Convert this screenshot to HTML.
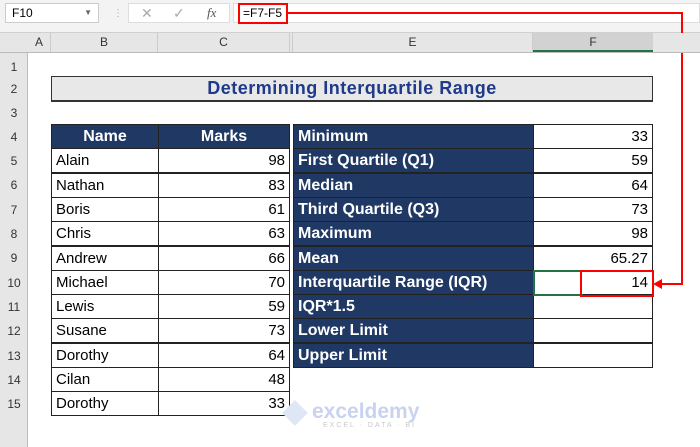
<!DOCTYPE html><html><head><style>
body{margin:0;width:700px;height:447px;overflow:hidden;background:#fff;font-family:"Liberation Sans",sans-serif;position:relative}
.a{position:absolute;box-sizing:border-box}
.hdr{background:#e6e6e6;color:#333;font-size:12px;text-align:center}
.rn{position:absolute;left:0;width:28px;text-align:center;font-size:12px;color:#333}
.cell{position:absolute;box-sizing:border-box;border:1px solid #222;font-size:15px;line-height:23px;padding:0 4px;white-space:nowrap}
.dk{background:#1f3864;color:#fff;font-weight:bold}
</style></head><body>
<div class="a" style="left:0;top:0;width:700px;height:33px;background:#f3f3f3;border-bottom:1px solid #d0d0d0"></div>
<div class="a" style="left:5px;top:3px;width:94px;height:20px;background:#fff;border:1px solid #ccc;font-size:12px;line-height:18px;padding-left:6px">F10<span style="position:absolute;right:6px;color:#666;font-size:8px">▼</span></div>
<div class="a" style="left:113px;top:8px;color:#aaa;font-size:10px">⋮</div>
<div class="a" style="left:128px;top:3px;width:102px;height:20px;background:#fff;border:1px solid #ddd;color:#aaa;font-size:14px;line-height:18px"><span style="position:absolute;left:12px">✕</span><span style="position:absolute;left:44px">✓</span><span style="position:absolute;left:78px;color:#555;font-style:italic;font-family:'Liberation Serif';font-size:13px">fx</span></div>
<div class="a" style="left:233px;top:3px;width:467px;height:20px;background:#fff;border:1px solid #ddd"></div>
<div class="a" style="left:238px;top:3px;width:50px;height:21px;border:2px solid #f00;font-size:12px;line-height:17px;padding-left:3px">=F7-F5</div>
<div class="a" style="left:288px;top:12px;width:395px;height:2px;background:#f00"></div>
<div class="a" style="left:681px;top:12px;width:2px;height:273px;background:#f00"></div>
<div class="a" style="left:660px;top:283px;width:23px;height:2px;background:#f00"></div>
<div class="a" style="left:653px;top:279px;width:0;height:0;border-top:5px solid transparent;border-bottom:5px solid transparent;border-right:9px solid #f00"></div>
<div class="a hdr" style="left:0;top:33px;width:700px;height:20px;border-bottom:1px solid #bbb"></div>
<div class="a hdr" style="left:28px;top:33px;width:23px;height:19px;line-height:19px;border-right:1px solid #ccc">A</div>
<div class="a hdr" style="left:51px;top:33px;width:107px;height:19px;line-height:19px;border-right:1px solid #ccc">B</div>
<div class="a hdr" style="left:158px;top:33px;width:132px;height:19px;line-height:19px;border-right:1px solid #ccc">C</div>
<div class="a hdr" style="left:290px;top:33px;width:3px;height:19px;border-right:1px solid #ccc"></div>
<div class="a hdr" style="left:293px;top:33px;width:240px;height:19px;line-height:19px;border-right:1px solid #ccc">E</div>
<div class="a hdr" style="left:533px;top:33px;width:120px;height:19px;line-height:19px;background:#d2d2d2;border-bottom:2px solid #217346">F</div>
<div class="a" style="left:0;top:53px;width:28px;height:394px;background:#e6e6e6;border-right:1px solid #bbb"></div>
<div class="rn" style="top:60px">1</div><div class="rn" style="top:82px">2</div><div class="rn" style="top:106px">3</div>
<div class="rn" style="top:130px">4</div><div class="rn" style="top:154px">5</div><div class="rn" style="top:178px">6</div>
<div class="rn" style="top:203px">7</div><div class="rn" style="top:227px">8</div><div class="rn" style="top:251px">9</div>
<div class="rn" style="top:276px">10</div><div class="rn" style="top:300px">11</div><div class="rn" style="top:324px">12</div>
<div class="rn" style="top:349px">13</div><div class="rn" style="top:373px">14</div><div class="rn" style="top:397px">15</div>
<div class="a" style="left:51px;top:76px;width:602px;height:26px;background:#e8e8e8;border:1px solid #333;border-bottom:2px solid #333;text-align:center;font-weight:bold;color:#1f3a8a;font-size:18px;line-height:23px;letter-spacing:.5px">Determining Interquartile Range</div>
<div id="t"></div>
<script>
var h='',names=[["Alain",98],["Nathan",83],["Boris",61],["Chris",63],["Andrew",66],["Michael",70],["Lewis",59],["Susane",73],["Dorothy",64],["Cilan",48],["Dorothy",33]];
var top0=124,rh=24.3;
h+='<div class="cell dk" style="left:51px;top:124px;width:108px;height:25px;text-align:center;font-size:16px">Name</div>';
h+='<div class="cell dk" style="left:158px;top:124px;width:132px;height:25px;text-align:center;font-size:16px">Marks</div>';
names.forEach(function(n,i){var y=Math.round(top0+rh*(i+1));h+='<div class="cell" style="left:51px;top:'+y+'px;width:108px;height:25px">'+n[0]+'</div><div class="cell" style="left:158px;top:'+y+'px;width:132px;height:25px;text-align:right">'+n[1]+'</div>';});
var st=[["Minimum","33"],["First Quartile (Q1)","59"],["Median","64"],["Third Quartile (Q3)","73"],["Maximum","98"],["Mean","65.27"],["Interquartile Range (IQR)","14"],["IQR*1.5",""],["Lower Limit",""],["Upper Limit",""]];
st.forEach(function(n,i){var y=Math.round(top0+rh*i);h+='<div class="cell dk" style="left:293px;top:'+y+'px;width:241px;height:25px;font-size:16px">'+n[0]+'</div><div class="cell" style="left:533px;top:'+y+'px;width:120px;height:25px;text-align:right">'+n[1]+'</div>';});
document.getElementById('t').innerHTML=h;
</script>
<div class="a" style="left:533px;top:270px;width:50px;height:26px;border:2px solid #217346;border-right:none"></div>
<div class="a" style="left:580px;top:270px;width:74px;height:27px;border:2px solid #f00"></div>
<div class="a" style="left:282px;top:400px;width:26px;height:26px;background:#dfe6f5;transform:rotate(45deg) scale(.7)"></div>
<div class="a" style="left:312px;top:400px;font-size:21px;font-weight:bold;color:#c9d3f0">exceldemy</div>
<div class="a" style="left:323px;top:422px;font-size:7px;letter-spacing:2px;color:#c8c8c8">EXCEL · DATA · BI</div>
</body></html>
